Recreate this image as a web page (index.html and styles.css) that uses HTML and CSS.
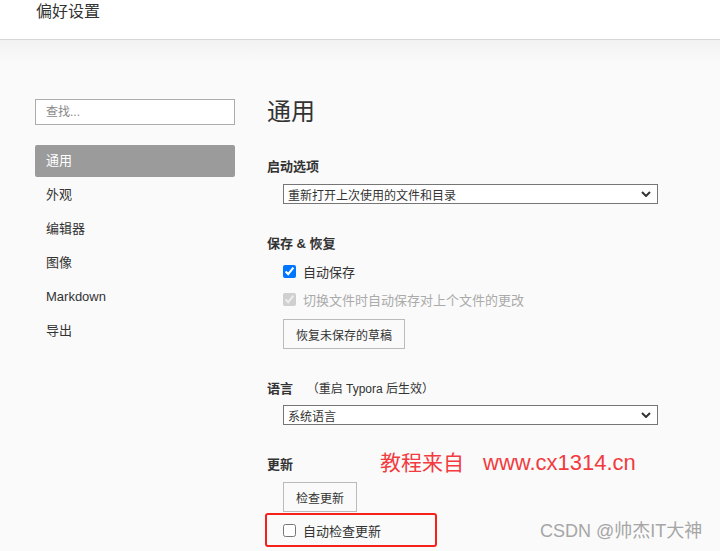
FILE: index.html
```html
<!DOCTYPE html>
<html lang="zh-CN">
<head>
  <meta charset="UTF-8">
  <meta name="viewport" content="width=device-width, initial-scale=1.0">
  <title>偏好设置</title>
  <link rel="stylesheet" href="styles.css">
</head>
<body>
  <div class="header">偏好设置</div>

  <div class="prefs">
    <div class="sidebar">
      <input class="search" type="text" placeholder="查找...">
      <ul class="menu">
        <li class="active">通用</li>
        <li>外观</li>
        <li>编辑器</li>
        <li>图像</li>
        <li>Markdown</li>
        <li>导出</li>
      </ul>
    </div>

    <div class="main">
      <h1>通用</h1>

      <div class="group first">
        <h3>启动选项</h3>
        <div class="select">
          <span>重新打开上次使用的文件和目录</span>
          <svg width="10" height="6" viewBox="0 0 10 6"><path d="M1 1l4 4 4-4" fill="none" stroke="#333" stroke-width="2"/></svg>
        </div>
      </div>

      <div class="group">
        <h3>保存 &amp; 恢复</h3>
        <label class="check"><input type="checkbox" checked>自动保存</label>
        <label class="check disabled"><input type="checkbox" checked disabled>切换文件时自动保存对上个文件的更改</label>
        <button class="btn">恢复未保存的草稿</button>
      </div>

      <div class="group">
        <h3>语言 <span class="hint">（重启 Typora 后生效）</span></h3>
        <div class="select">
          <span>系统语言</span>
          <svg width="10" height="6" viewBox="0 0 10 6"><path d="M1 1l4 4 4-4" fill="none" stroke="#333" stroke-width="2"/></svg>
        </div>
      </div>

      <div class="group">
        <h3 class="update-title">更新 <span class="note">教程来自<em>www.cx1314.cn</em></span></h3>
        <button class="btn">检查更新</button>
        <label class="check boxed"><input type="checkbox">自动检查更新<span class="mark"></span></label>
      </div>
    </div>
  </div>

  <div class="watermark">CSDN @帅杰IT大神</div>
</body>
</html>
```

FILE: styles.css
```css
* {
  margin: 0;
  padding: 0;
  box-sizing: border-box;
}
body {
  font-family: "Liberation Sans", "Noto Sans CJK SC", sans-serif;
  color: #333;
  background-color: #fafafa;
  width: 720px;
  height: 551px;
  overflow: hidden;
  position: relative;
}
.header {
  height: 40px;
  padding-left: 36px;
  font-size: 16px;
  line-height: 24px;
  background-color: #fff;
  border-bottom: 1px solid #d6d6d6;
}
.prefs {
  display: flex;
  gap: 32px;
  padding: 59px 0 0 35px;
  height: 511px;
  background: linear-gradient(#f2f2f2, #fafafa 22px);
}

/* 左侧菜单 */
.sidebar {
  width: 200px;
  flex-shrink: 0;
}
.search {
  display: block;
  width: 200px;
  height: 26px;
  border: 1px solid #acacac;
  background-color: #fff;
  padding-left: 10px;
  font-family: inherit;
  font-size: 12px;
  color: #333;
  outline: none;
}
.search::placeholder {
  color: #888;
}
.menu {
  list-style-type: none;
  margin-top: 20px;
}
.menu li {
  height: 32px;
  line-height: 32px;
  margin-bottom: 2px;
  padding-left: 11px;
  font-size: 13px;
  border-radius: 2px;
}
.menu li.active {
  background-color: #9b9b9b;
  color: #fff;
}

/* 右侧内容 */
.main {
  flex: 1;
  position: relative;
}
.main h1 {
  font-size: 24px;
  font-weight: normal;
  line-height: 26px;
}
.group {
  margin-top: 31px;
}
.group.first {
  margin-top: 33px;
}
.group h3 {
  font-size: 13px;
  font-weight: bold;
  line-height: 18px;
  margin-bottom: 7px;
}
.group.first h3 {
  margin-bottom: 8px;
}
.group h3 .hint {
  font-size: 12px;
  font-weight: normal;
  margin-left: 10px;
}
.select {
  width: 375px;
  height: 20px;
  margin-left: 16px;
  border: 1px solid #767676;
  background-color: #fff;
  display: flex;
  align-items: center;
  justify-content: space-between;
  padding: 0 6px 0 4px;
  font-size: 12px;
}
.check {
  display: flex;
  align-items: center;
  gap: 7px;
  height: 20px;
  margin: 8px 0 8px 16px;
  font-size: 13px;
}
.check + .check {
  margin-top: 0;
}
.check input {
  width: 13px;
  height: 13px;
  margin: 0;
  accent-color: #0075ff;
}
.check.disabled {
  color: #aaa;
}
.btn {
  display: block;
  margin: 10px 0 0 16px;
  height: 30px;
  padding: 0 12px;
  border: 1px solid #bbb;
  background-color: #fafafa;
  font-family: inherit;
  font-size: 12px;
  color: #333;
}
.update-title + .btn {
  margin-top: 8px;
}
.check.boxed {
  position: relative;
  width: fit-content;
}
.mark {
  position: absolute;
  left: -18px;
  top: -7px;
  width: 172px;
  height: 34px;
  border: 2px solid #f5221b;
  border-radius: 3px;
}

/* 水印 */
.update-title {
  position: relative;
}
.note {
  position: absolute;
  left: 113px;
  top: -6px;
  font-size: 21px;
  line-height: 26px;
  font-weight: normal;
  color: #f23a3f;
  white-space: nowrap;
}
.note em {
  font-style: normal;
  font-size: 22px;
  margin-left: 19px;
}
.watermark {
  position: absolute;
  left: 540px;
  top: 519px;
  font-size: 18px;
  line-height: 24px;
  color: #a6a6a6;
  white-space: nowrap;
}
```
